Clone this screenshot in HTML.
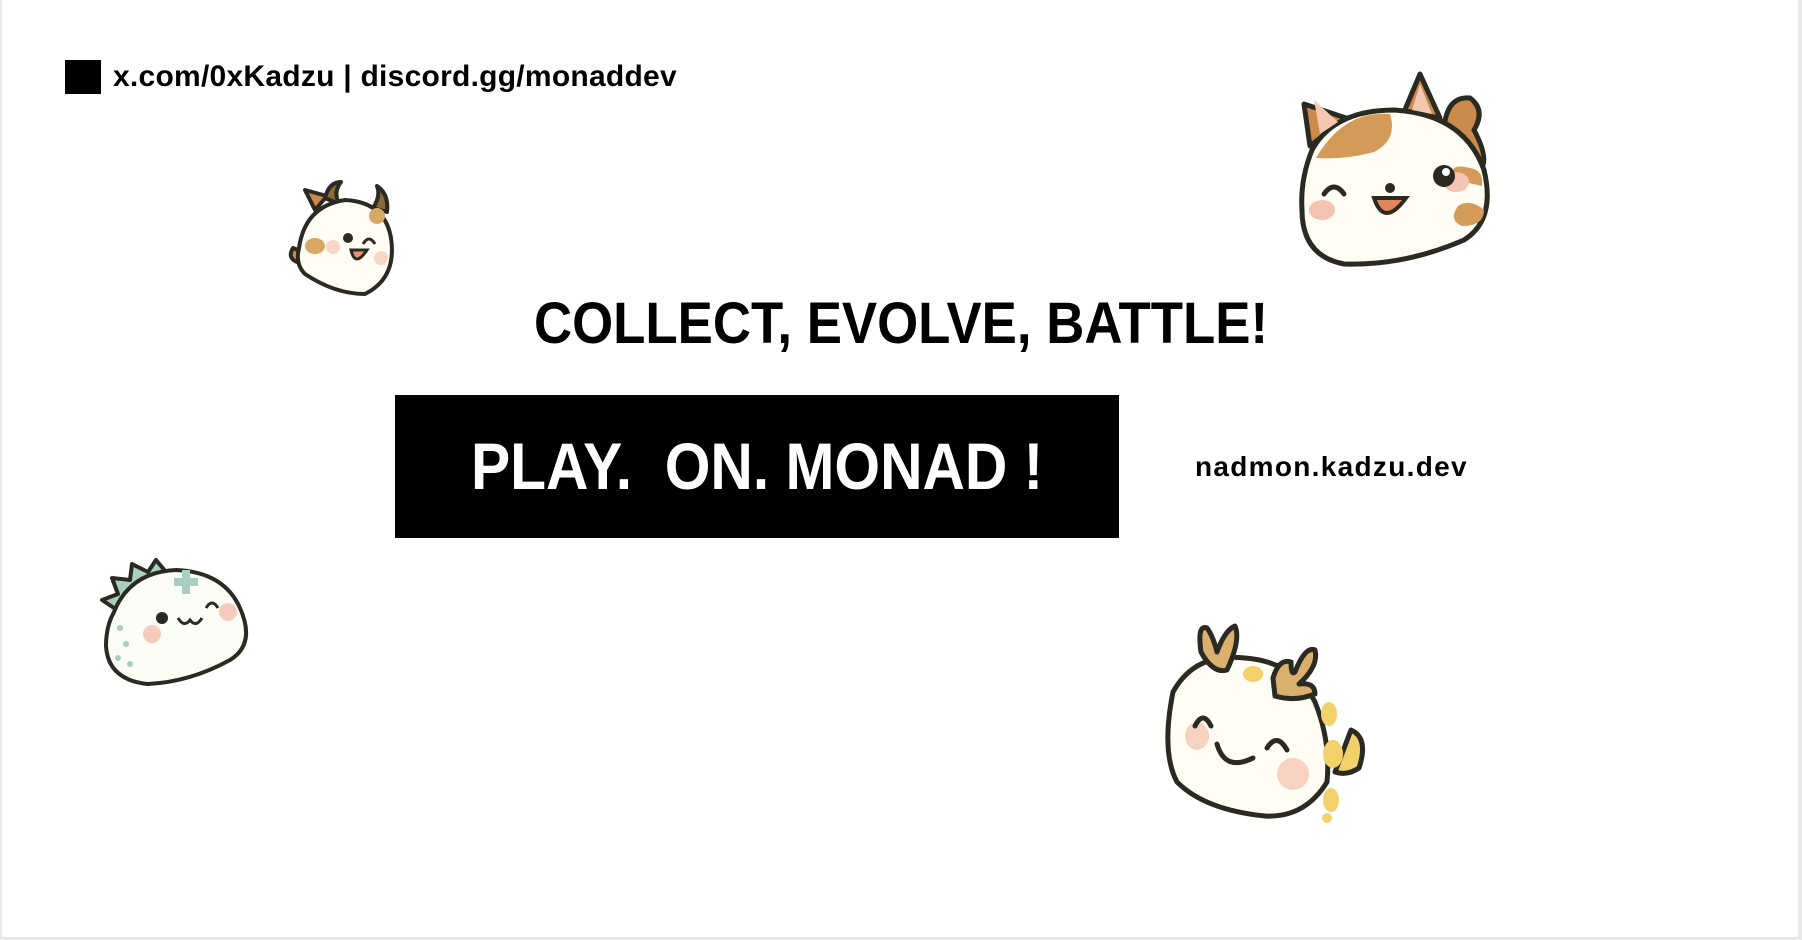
<!DOCTYPE html>
<html><head><meta charset="utf-8"><style>
html,body{margin:0;padding:0;background:#fff;}
body{width:1802px;height:940px;position:relative;overflow:hidden;font-family:"Liberation Sans",sans-serif;}
.frame{position:absolute;left:0;top:0;border-left:2px solid #e6e8ec;border-right:4px solid #e6e8ec;border-bottom:3px solid #e6e8ec;box-sizing:border-box;width:1802px;height:940px;}
.sq{position:absolute;left:65px;top:60px;width:36px;height:34px;background:#000;}
.links{position:absolute;left:113px;top:60px;font-size:30px;font-weight:bold;color:#000;letter-spacing:0.25px;white-space:nowrap;}
.h1{position:absolute;left:534px;top:290px;font-size:58px;font-weight:bold;color:#000;white-space:nowrap;transform:scaleX(0.91);transform-origin:left top;}
.box{position:absolute;left:395px;top:395px;width:724px;height:143px;background:#000;}
.box span{position:absolute;left:76px;top:33px;font-size:66px;font-weight:bold;color:#fff;white-space:nowrap;transform:scaleX(0.89);transform-origin:left top;}
.url{position:absolute;left:1195px;top:451px;font-size:28px;font-weight:bold;color:#000;white-space:nowrap;letter-spacing:1.3px;}
svg{position:absolute;}
</style></head><body>
<div class="frame"></div>
<div class="sq"></div>
<div class="links">x.com/0xKadzu | discord.gg/monaddev</div>
<div class="h1">COLLECT, EVOLVE, BATTLE!</div>
<div class="box"><span>PLAY.&nbsp; ON. MONAD !</span></div>
<div class="url">nadmon.kadzu.dev</div>

<!-- cow -->
<svg style="left:285px;top:178px" width="132" height="120" viewBox="0 0 132 120">
<g stroke="#2b2a22" stroke-width="4" stroke-linejoin="round">
<path d="M30 32 L20 12 L42 18 Z" fill="#c98a4a"/>
<path d="M40 20 Q44 4 56 4 Q48 14 54 26 Z" fill="#8b6a3a"/>
<path d="M88 30 Q96 18 92 8 Q104 16 102 34 Z" fill="#8b6a3a"/>
<path d="M8 70 Q2 80 12 84 L18 74 Z" fill="#c98a4a"/>
<path d="M14 70 Q20 28 60 22 Q100 24 106 60 Q112 100 80 116 Q50 116 20 96 Q10 86 14 70 Z" fill="#fffdf4"/>
</g>
<ellipse cx="30" cy="68" rx="10" ry="8" fill="#d9a766"/>
<ellipse cx="92" cy="38" rx="8" ry="8" fill="#d9a766"/>
<circle cx="48" cy="69" r="7" fill="#f7d6c4"/>
<circle cx="96" cy="80" r="7" fill="#f7d6c4"/>
<circle cx="63" cy="60" r="5" fill="#2b2a22"/>
<path d="M78 66 Q84 56 90 66" stroke="#2b2a22" stroke-width="3" fill="none"/>
<path d="M66 72 Q70 90 82 72 Z" fill="#e8956a" stroke="#2b2a22" stroke-width="3"/>
</svg>

<!-- cat -->
<svg style="left:1294px;top:70px" width="205" height="200" viewBox="0 0 205 200">
<g stroke="#2b2a22" stroke-width="5" stroke-linejoin="round">
<path d="M16 76 L10 34 L52 48 Z" fill="#c98a4a"/>
<path d="M110 42 L126 4 L146 48 Z" fill="#c98a4a"/>
<path d="M150 60 Q152 26 176 28 Q192 40 180 60 Q196 90 186 100 Z" fill="#c98a4a"/>
<path d="M18 80 Q40 40 100 40 Q170 44 190 100 Q202 150 170 170 Q110 196 50 194 Q8 186 8 140 Q6 110 18 80 Z" fill="#fffdf4"/>
</g>
<path d="M20 30 L26 64 L44 52 Z" fill="#f6c7b0"/>
<path d="M126 14 L118 40 L138 44 Z" fill="#f6c7b0"/>
<path d="M22 88 Q50 40 96 44 Q104 70 80 82 Q50 90 22 88 Z" fill="#d49a58"/>
<path d="M162 110 Q152 92 176 98 Q190 100 188 116 Z" fill="#d49a58"/>
<path d="M168 156 Q154 150 164 136 Q176 128 190 140 Q190 156 168 156 Z" fill="#d49a58"/>
<ellipse cx="28" cy="140" rx="13" ry="10" fill="#f5c4b0"/>
<ellipse cx="162" cy="112" rx="13" ry="10" fill="#f5c4b0"/>
<path d="M30 124 Q40 110 50 124" stroke="#2b2a22" stroke-width="5" fill="none" stroke-linecap="round"/>
<circle cx="150" cy="106" r="11" fill="#2b2a22"/><circle cx="152" cy="102" r="4" fill="#fff"/>
<path d="M80 128 Q90 158 112 128 Z" fill="#e0865a" stroke="#2b2a22" stroke-width="4"/>
<circle cx="96" cy="118" r="5" fill="#2b2a22"/>
</svg>

<!-- dino -->
<svg style="left:100px;top:548px" width="152" height="140" viewBox="0 0 152 140">
<g stroke="#2b2a22" stroke-width="4" stroke-linejoin="round">
<path d="M14 60 L2 52 L18 46 L12 30 L30 32 L32 16 L48 24 L56 12 L66 24 L40 60 Z" fill="#a9cfc0"/>
<path d="M14 64 Q30 24 76 22 Q124 24 140 60 Q156 96 130 112 Q90 134 48 136 Q8 132 6 98 Q6 78 14 64 Z" fill="#fbfdf6"/>
</g>
<path d="M74 30 h8 v-8 h8 v8 h8 v8 h-8 v8 h-8 v-8 h-8 Z" fill="#a9cfc0"/>
<circle cx="20" cy="80" r="3" fill="#a9cfc0"/><circle cx="26" cy="96" r="3" fill="#a9cfc0"/><circle cx="18" cy="110" r="3" fill="#a9cfc0"/><circle cx="30" cy="116" r="3" fill="#a9cfc0"/>
<circle cx="52" cy="86" r="9" fill="#f7cbbb"/><circle cx="128" cy="64" r="9" fill="#f7cbbb"/>
<circle cx="62" cy="70" r="6" fill="#2b2a22"/>
<path d="M106 60 Q112 50 118 60" stroke="#2b2a22" stroke-width="3" fill="none"/>
<path d="M78 70 Q84 80 90 72 Q96 80 102 70" stroke="#2b2a22" stroke-width="3" fill="none"/>
</svg>

<!-- deer -->
<svg style="left:1155px;top:622px" width="220" height="214" viewBox="0 0 220 214">
<g stroke="#2b2a22" stroke-width="5" stroke-linejoin="round">
<path d="M196 108 Q214 116 204 146 Q192 154 180 150 Z" fill="#f2d06a"/>
<path d="M18 70 Q40 30 90 36 Q140 40 160 80 Q176 120 172 160 Q150 196 110 194 Q50 188 22 160 Q6 130 18 70 Z" fill="#fffdf4"/>
<path d="M46 30 Q42 2 52 6 Q58 14 62 30 Q70 8 80 4 Q86 18 72 48 Q58 52 46 30 Z" fill="#d9b06c"/>
<path d="M118 56 Q124 36 136 40 Q136 54 140 50 Q150 24 160 28 Q164 44 144 62 Q160 60 160 72 Q140 80 120 74 Z" fill="#d9b06c"/>
</g>
<ellipse cx="42" cy="114" rx="12" ry="14" fill="#f7d2c0"/>
<ellipse cx="138" cy="152" rx="16" ry="16" fill="#f7d2c0"/>
<ellipse cx="98" cy="52" rx="10" ry="8" fill="#f2d06a"/>
<ellipse cx="174" cy="92" rx="8" ry="12" fill="#f2d06a"/>
<ellipse cx="176" cy="178" rx="8" ry="12" fill="#f2d06a"/>
<ellipse cx="178" cy="132" rx="10" ry="14" fill="#f2d06a"/>
<circle cx="172" cy="196" r="5" fill="#f2d06a"/>
<path d="M40 104 Q48 88 56 104" stroke="#2b2a22" stroke-width="5" fill="none" stroke-linecap="round"/>
<path d="M112 126 Q122 110 132 128" stroke="#2b2a22" stroke-width="5" fill="none" stroke-linecap="round"/>
<path d="M62 122 Q70 150 98 136" stroke="#2b2a22" stroke-width="5" fill="none" stroke-linecap="round"/>
</svg>
</body></html>
